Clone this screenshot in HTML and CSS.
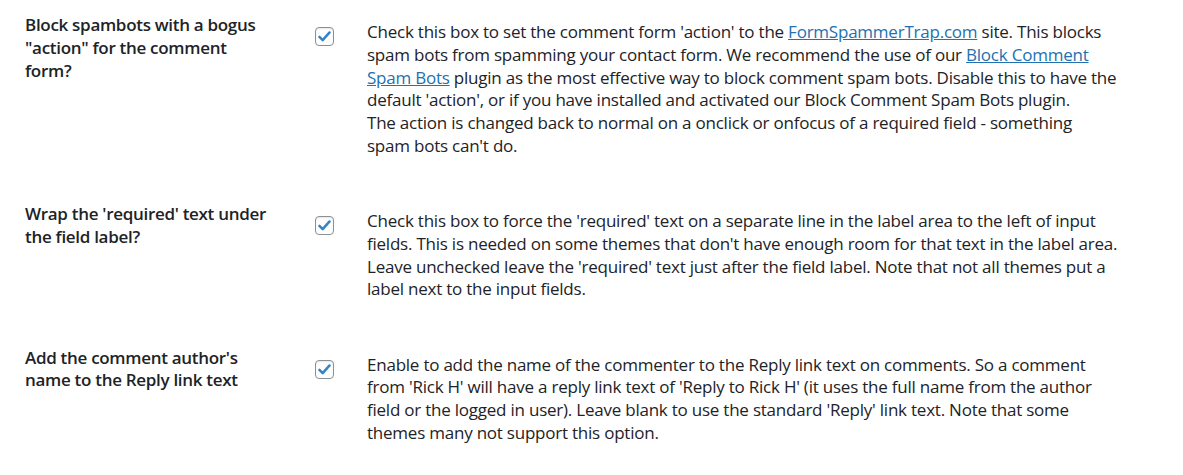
FILE: index.html
```html
<!DOCTYPE html>
<html lang="en">
<head>
<meta charset="utf-8">
<title>Settings</title>
<link rel="stylesheet" href="styles.css">
</head>
<body>
<div class="settings">
  <div class="row">
    <div class="label">Block spambots with a bogus "action" for the comment form?</div>
    <div class="control"><span class="checkbox"><svg viewBox="0 0 20 20" width="15" height="15"><path d="M3.2 10.4 L7.6 14.8 L16.8 4.6" fill="none" stroke="#3582c4" stroke-width="3.3" stroke-linecap="round" stroke-linejoin="round"/></svg></span></div>
    <div class="desc">Check this box to set the comment form 'action' to the <a href="#">FormSpammerTrap.com</a> site. This blocks spam bots from spamming your contact form. We recommend the use of our <a href="#">Block Comment Spam Bots</a> plugin as the most effective way to block comment spam bots. Disable this to have the default 'action', or if you have installed and activated our Block Comment Spam Bots plugin.<br>The action is changed back to normal on a onclick or onfocus of a required field - something spam bots can't do.</div>
  </div>
  <div class="row">
    <div class="label">Wrap the 'required' text under the field label?</div>
    <div class="control"><span class="checkbox"><svg viewBox="0 0 20 20" width="15" height="15"><path d="M3.2 10.4 L7.6 14.8 L16.8 4.6" fill="none" stroke="#3582c4" stroke-width="3.3" stroke-linecap="round" stroke-linejoin="round"/></svg></span></div>
    <div class="desc">Check this box to force the 'required' text on a separate line in the label area to the left of input fields. This is needed on some themes that don't have enough room for that text in the label area. Leave unchecked leave the 'required' text just after the field label. Note that not all themes put a label next to the input fields.</div>
  </div>
  <div class="row">
    <div class="label">Add the comment author's name to the Reply link text</div>
    <div class="control"><span class="checkbox"><svg viewBox="0 0 20 20" width="15" height="15"><path d="M3.2 10.4 L7.6 14.8 L16.8 4.6" fill="none" stroke="#3582c4" stroke-width="3.3" stroke-linecap="round" stroke-linejoin="round"/></svg></span></div>
    <div class="desc">Enable to add the name of the commenter to the Reply link text on comments. So a comment from 'Rick H' will have a reply link text of 'Reply to Rick H' (it uses the full name from the author field or the logged in user). Leave blank to use the standard 'Reply' link text. Note that some themes many not support this option.</div>
  </div>
</div>
</body>
</html>
```

FILE: styles.css
```css
html, body {
  margin: 0;
  padding: 0;
  background: #ffffff;
}
body {
  font-family: "Open Sans", "Noto Sans", sans-serif;
  font-size: 17px;
  line-height: 22.75px;
  color: #1d2327;
}
.settings {
  padding: 0 0 0 25px;
}
.row {
  display: grid;
  grid-template-columns: 246px 96px 751px;
  padding: 14px 0 31.5px;
}
.label {
  font-weight: 600;
  letter-spacing: -0.3px;
}
.control {
  padding-left: 44px;
  padding-top: 13px;
}
.checkbox {
  display: flex;
  align-items: center;
  justify-content: center;
  width: 17px;
  height: 17px;
  border: 1px solid #8c8f94;
  border-radius: 4px;
  background: #fff;
  box-shadow: inset 0 1px 2px rgba(0,0,0,0.1);
}
.desc {
  padding-top: 7px;
  letter-spacing: -0.228px;
}
.desc a {
  color: #2271b1;
  text-decoration: underline;
}
```
